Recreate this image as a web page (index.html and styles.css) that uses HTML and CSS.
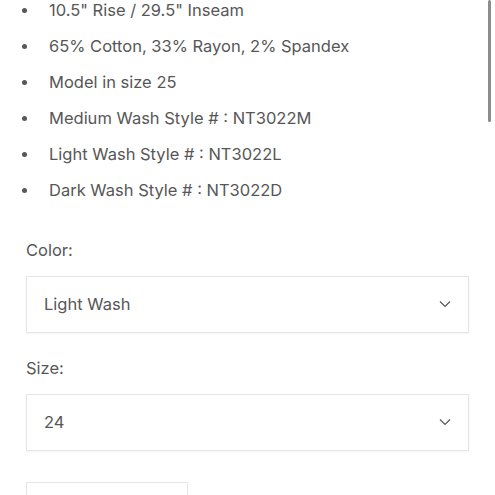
FILE: index.html
```
<!DOCTYPE html>
<html lang="en">
<head>
    <meta charset="UTF-8">
    <meta name="viewport" content="width=device-width, initial-scale=1.0">
    <title>Product details</title>
    <link rel="stylesheet" href="styles.css">
</head>
<body>
    <div class="scroll-thumb"></div>

    <div class="product">
        <ul class="details">
            <li>10.5" Rise / 29.5" Inseam</li>
            <li>65% Cotton, 33% Rayon, 2% Spandex</li>
            <li>Model in size 25</li>
            <li>Medium Wash Style # : NT3022M</li>
            <li>Light Wash Style # : NT3022L</li>
            <li>Dark Wash Style # : NT3022D</li>
        </ul>

        <div class="field field-color">
            <label class="field-label">Color:</label>
            <div class="select">
                <span>Light Wash</span>
                <svg viewBox="0 0 12 8"><path d="M1 1.5l5 5 5-5"/></svg>
            </div>
        </div>

        <div class="field">
            <label class="field-label">Size:</label>
            <div class="select">
                <span>24</span>
                <svg viewBox="0 0 12 8"><path d="M1 1.5l5 5 5-5"/></svg>
            </div>
        </div>

        <div class="quantity"></div>
    </div>
</body>
</html>
```

FILE: styles.css
```
* {
    margin: 0;
    padding: 0;
    box-sizing: border-box;
}

html, body {
    background: #fff;
    overflow: hidden;
}

body {
    font-family: Inter, "Noto Sans", sans-serif;
    color: #575757;
    font-size: 16.5px;
}

/* 滚动条 */
.scroll-thumb {
    position: absolute;
    top: 0;
    right: 4px;
    width: 3px;
    height: 122px;
    border-radius: 2px;
    background: #8c8c8c;
}

.product {
    padding: 0 26px;
}

/* 商品说明列表 */
.details {
    list-style: none;
    margin-top: -8px;
}
.details li {
    display: flex;
    align-items: center;
    height: 36px;
    line-height: 36px;
}
.details li::before {
    content: "";
    width: 5px;
    height: 5px;
    border-radius: 50%;
    background: #575757;
    margin-left: -4px;
    margin-right: 22px;
    flex-shrink: 0;
}

/* 选项 */
.field {
    margin-top: 23px;
}
.field-color {
    margin-top: 30px;
}
.field-label {
    display: block;
    line-height: 24px;
    margin-bottom: 14px;
}

.select {
    display: flex;
    align-items: center;
    justify-content: space-between;
    height: 57px;
    padding: 0 17px 2px;
    border: 1px solid #e6e6e6;
    box-shadow: 0 1px 2px rgba(0,0,0,0.05);
    background: #fff;
}
.select svg {
    width: 12px;
    height: 8px;
    fill: none;
    stroke: #575757;
    stroke-width: 1.2;
}

.quantity {
    width: 162px;
    height: 40px;
    margin-top: 31px;
    border: 1px solid #e6e6e6;
}
```
